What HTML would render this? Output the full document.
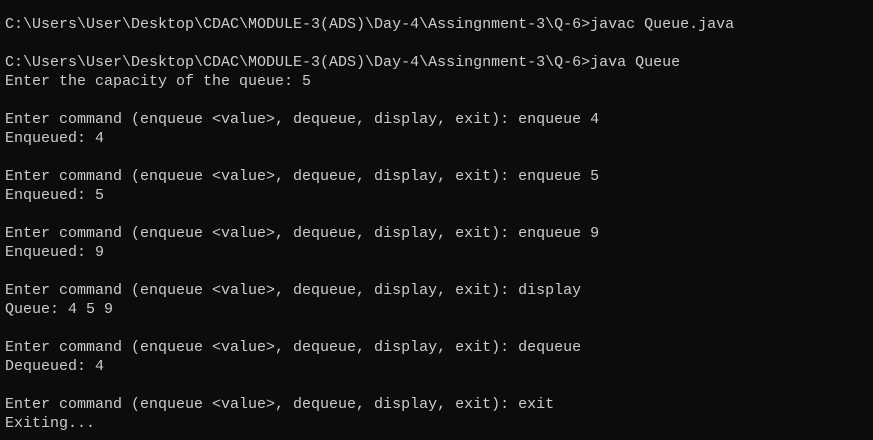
<!DOCTYPE html>
<html><head><meta charset="utf-8"><style>
html,body{margin:0;padding:0;background:#0c0c0c;width:873px;height:440px;overflow:hidden}
pre{margin:0;position:absolute;left:5px;top:15px;font-family:"Liberation Mono",monospace;font-size:15px;line-height:19px;color:#cccccc;white-space:pre}
</style></head><body><pre>
C:\Users\User\Desktop\CDAC\MODULE-3(ADS)\Day-4\Assingnment-3\Q-6&gt;javac Queue.java

C:\Users\User\Desktop\CDAC\MODULE-3(ADS)\Day-4\Assingnment-3\Q-6&gt;java Queue
Enter the capacity of the queue: 5

Enter command (enqueue &lt;value&gt;, dequeue, display, exit): enqueue 4
Enqueued: 4

Enter command (enqueue &lt;value&gt;, dequeue, display, exit): enqueue 5
Enqueued: 5

Enter command (enqueue &lt;value&gt;, dequeue, display, exit): enqueue 9
Enqueued: 9

Enter command (enqueue &lt;value&gt;, dequeue, display, exit): display
Queue: 4 5 9

Enter command (enqueue &lt;value&gt;, dequeue, display, exit): dequeue
Dequeued: 4

Enter command (enqueue &lt;value&gt;, dequeue, display, exit): exit
Exiting...</pre></body></html>
